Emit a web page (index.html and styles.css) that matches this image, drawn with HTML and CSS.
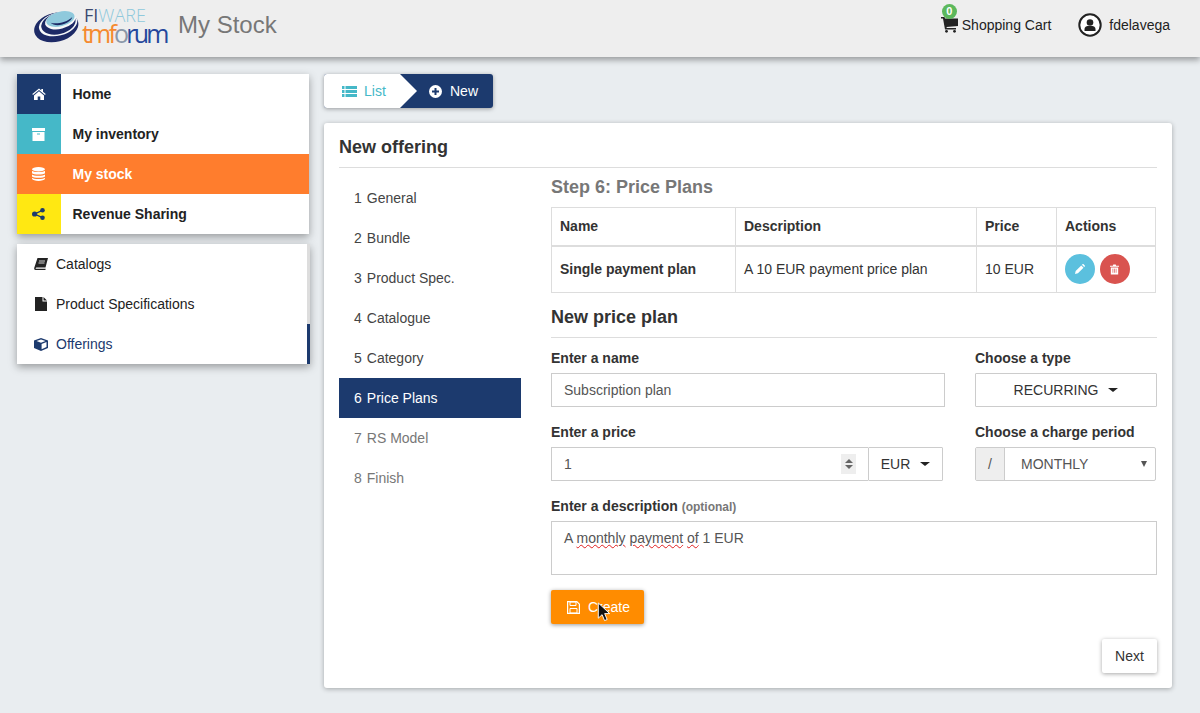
FILE: index.html
```html
<!DOCTYPE html>
<html lang="en">
<head>
	<meta charset="UTF-8" />
	<meta name="viewport" content="width=device-width, initial-scale=1.0" />
	<title>My Stock</title>
	<link rel="stylesheet" href="styles.css">
</head>
<body>
	<header class="topbar">
		<div class="brand">
			<svg class="swirl" width="46" height="36" viewBox="0 0 46 36">
				<g transform="rotate(-14 23 18)">
					<ellipse cx="22" cy="19" rx="22.500" ry="14.500" fill="#1d2a66"/>
					<ellipse cx="24.500" cy="16.500" rx="19.500" ry="11.500" fill="#f6f8f9"/>
					<ellipse cx="25" cy="16" rx="17.500" ry="10.500" fill="#1d2a66"/>
					<ellipse cx="27.500" cy="13.500" rx="15.500" ry="8.300" fill="#f6f8f9"/>
					<ellipse cx="28" cy="12" rx="14.500" ry="7.300" fill="#8fc9dc"/>
					<path d="M17.500 13C21 16 33 17.500 40 13C37 19 21 20 17.500 13Z" fill="#1d2a66"/>
				</g>
			</svg>
			<div class="wordmark">
				<div class="fiware"><span class="fi">FI</span>WARE</div>
				<div class="tmforum"><span class="tm">tmf</span><span class="o">o</span>rum</div>
			</div>
			<div class="app-title">My Stock</div>
		</div>
		<nav class="user-nav">
			<a class="cart">
				<span class="badge">0</span>
				<svg width="17" height="16" viewBox="0 0 17 16"><path d="M0 0h3.500l.5 1.500H17v7.500L5.500 10l.3 1H15v1.500H4L2 1.500H0Z" fill="#222"/><circle cx="5.500" cy="14.300" r="1.400" fill="#222"/><circle cx="13.500" cy="14.300" r="1.400" fill="#222"/></svg>
				<span>Shopping Cart</span>
			</a>
			<a class="user">
				<svg width="24" height="24" viewBox="0 0 24 24"><circle cx="12" cy="12" r="10.700" fill="#fff" stroke="#222" stroke-width="2"/><circle cx="12" cy="9.500" r="3.300" fill="#222"/><path d="M6.500 18v-2c0-2 2-3 3-3h5c1 0 3 1 3 3v2Z" fill="#222"/></svg>
				<span>fdelavega</span>
			</a>
		</nav>
	</header>

	<div class="page">
		<aside class="sidebar">
			<ul class="main-menu">
				<li>
					<span class="tile tile-home"><svg width="14" height="12" viewBox="0 0 14 12"><path d="M7 0.500 0.300 6l.7.900L7 2l6 4.900.7-.9L11 3.800V1H9.300v1.400ZM2 7.500V12h3.700V8.500h2.600V12H12V7.500L7 3.300Z" fill="#fff"/></svg></span>
					<span class="label">Home</span>
				</li>
				<li>
					<span class="tile tile-inventory"><svg width="13" height="13" viewBox="0 0 13 13"><path d="M0 0h13v3H0ZM0.500 4h12v9H.500Z" fill="#fff"/><path d="M5 5.500h3v1H5Z" fill="#45b8c8"/></svg></span>
					<span class="label">My inventory</span>
				</li>
				<li class="active">
					<span class="tile tile-stock"><svg width="13" height="14" viewBox="0 0 13 14"><ellipse cx="6.500" cy="2.200" rx="6.500" ry="2.200" fill="#fff"/><path d="M0 3.700C1 5.500 12 5.500 13 3.700V6.200C12 8 1 8 0 6.200ZM0 7.400C1 9.200 12 9.200 13 7.400V9.500C12 11.300 1 11.300 0 9.500ZM0 10.800C1 12.500 12 12.500 13 10.800V11.800C12 14.600 1 14.600 0 11.800Z" fill="#fff"/></svg></span>
					<span class="label">My stock</span>
				</li>
				<li>
					<span class="tile tile-revenue"><svg width="13" height="12" viewBox="0 0 13 12"><path d="M10.500 2.300 2.500 6l8 3.700" stroke="#1c3a6e" stroke-width="1.300" fill="none"/><circle cx="10.500" cy="2.300" r="2.300" fill="#1c3a6e"/><circle cx="2.600" cy="6" r="2.600" fill="#1c3a6e"/><circle cx="10.500" cy="9.700" r="2.300" fill="#1c3a6e"/></svg></span>
					<span class="label">Revenue Sharing</span>
				</li>
			</ul>
			<ul class="sub-menu">
				<li>
					<svg width="14" height="13" viewBox="0 0 14 13"><path d="M3.500 0H14l-2.500 9.500H2.500c-.8 0-1 .8-.7 1.200h9.900l-.3 1.300H1.500C.5 12 0 11 .2 10Z" fill="#222"/><path d="M5 3h6M4.500 5h6" stroke="#fff" stroke-width=".8"/></svg>
					<span>Catalogs</span>
				</li>
				<li>
					<svg width="14" height="14" viewBox="0 0 14 14"><path d="M1 0h7.500v4.500H13V14H1ZM9.500 0 13 3.500H9.500Z" fill="#222"/></svg>
					<span>Product Specifications</span>
				</li>
				<li class="current">
					<svg width="14" height="13" viewBox="0 0 14 13"><path d="M7 0 14 2.500V10L7 13 0 10V2.500Z" fill="#1c3a6e"/><path d="M7 1.500 11.500 3 7 4.700 2.500 3ZM7.600 6 12.500 4v5L7.600 11.300Z" fill="#fff"/></svg>
					<span>Offerings</span>
				</li>
			</ul>
		</aside>

		<main class="content">
			<div class="crumbs">
				<a class="crumb-list">
					<svg width="15" height="11" viewBox="0 0 15 11"><path d="M0 0h2.500v3H0ZM0 4h2.500v3H0ZM0 8h2.500v3H0ZM3.500 0H15v3H3.500ZM3.500 4H15v3H3.500ZM3.500 8H15v3H3.500Z" fill="#45b8c8"/></svg>
					<span>List</span>
				</a>
				<a class="crumb-new">
					<svg width="13" height="13" viewBox="0 0 13 13"><circle cx="6.500" cy="6.500" r="6.500" fill="#fff"/><path d="M3 5.500h2.500V3h2v2.500H10v2H7.500V10h-2V7.500H3Z" fill="#1c3a6e"/></svg>
					<span>New</span>
				</a>
			</div>

			<section class="panel">
				<h2 class="panel-title">New offering</h2>
				<div class="wizard">
					<ol class="steps">
						<li><span class="num">1</span>General</li>
						<li><span class="num">2</span>Bundle</li>
						<li><span class="num">3</span>Product Spec.</li>
						<li><span class="num">4</span>Catalogue</li>
						<li><span class="num">5</span>Category</li>
						<li class="active"><span class="num">6</span>Price Plans</li>
						<li class="todo"><span class="num">7</span>RS Model</li>
						<li class="todo"><span class="num">8</span>Finish</li>
					</ol>
					<div class="step-body">
						<h3 class="step-title">Step 6: Price Plans</h3>
						<table class="plans">
							<thead>
								<tr><th class="col-name">Name</th><th class="col-desc">Description</th><th class="col-price">Price</th><th>Actions</th></tr>
							</thead>
							<tbody>
								<tr>
									<td><b>Single payment plan</b></td>
									<td>A 10 EUR payment price plan</td>
									<td>10 EUR</td>
									<td class="actions">
										<span class="round round-edit"><svg width="10" height="10" viewBox="0 0 12 12"><path d="M0 12 .8 8.500 7.500 1.800l2.700 2.700L3.500 11.200ZM8.300 1 9 .3c.4-.4 1-.4 1.300 0l1.400 1.400c.4.400.4 1 0 1.300l-.7.700Z" fill="#fff"/></svg></span>
										<span class="round round-delete"><svg width="9" height="11" viewBox="0 0 11 12"><path d="M3.500 1.500 4 0h3l.5 1.500H11v1.200H0V1.500ZM1 3.500h9V12H1Z" fill="#fff"/><path d="M3.500 5v5M5.500 5v5M7.500 5v5" stroke="#d9534f" stroke-width=".8"/></svg></span>
									</td>
								</tr>
							</tbody>
						</table>

						<h3 class="form-title">New price plan</h3>

						<div class="form-row">
							<div class="field field-name">
								<label>Enter a name</label>
								<div class="input">Subscription plan</div>
							</div>
							<div class="field field-type">
								<label>Choose a type</label>
								<div class="dropdown">RECURRING <i class="caret"></i></div>
							</div>
						</div>

						<div class="form-row">
							<div class="field field-price">
								<label>Enter a price</label>
								<div class="input-group">
									<div class="input price-input">
										<span>1</span>
										<span class="spinner"><i class="up"></i><i class="down"></i></span>
									</div>
									<div class="dropdown currency">EUR <i class="caret"></i></div>
								</div>
							</div>
							<div class="field field-period">
								<label>Choose a charge period</label>
								<div class="period">
									<span class="addon">/</span>
									<span class="period-value">MONTHLY</span>
									<i class="select-arrow"></i>
								</div>
							</div>
						</div>

						<div class="field">
							<label class="label-desc">Enter a description <small>(optional)</small></label>
							<div class="input textarea">A <span class="typo">monthly</span> <span class="typo">payment</span> <span class="typo">of</span> 1 EUR</div>
						</div>

						<button class="btn-create">
							<svg width="13" height="13" viewBox="0 0 13 13"><path d="M.6.600h9.200l2.600 2.600v9.200H.6Z" fill="none" stroke="#fff" stroke-width="1.200"/><path d="M3 1h6v3.500H3ZM3 7.500h7V12H3Z" fill="none" stroke="#fff"/></svg>
							Create
						</button>
						<svg class="pointer" width="14" height="20" viewBox="0 0 14 21"><path d="M1 1v16l4-3.700 2.600 6.200 2.700-1.100-2.600-6.200h5.300Z" fill="#111" stroke="#fff" stroke-width="1"/></svg>

						<div class="wizard-foot"><button class="btn-next">Next</button></div>
					</div>
				</div>
			</section>
		</main>
	</div>
</body>
</html>
```

FILE: styles.css
```css
* {
	box-sizing: border-box;
}
html,
body {
	height: 713px;
	overflow: hidden;
}
body {
	margin: 0;
	font-family: "Liberation Sans", Arial, sans-serif;
	font-size: 14px;
	line-height: 20px;
	color: #333;
	background-color: #e9edf0;
}
ul,
ol {
	list-style: none;
	margin: 0;
	padding: 0;
}

/* top bar */
.topbar {
	height: 57px;
	padding: 0 30px 0 34px;
	display: flex;
	justify-content: space-between;
	background-color: #eee;
	box-shadow: 0 3px 6px rgba(0, 0, 0, 0.35);
}
.brand {
	display: flex;
	align-items: flex-start;
}
.swirl {
	margin-top: 8px;
}
.wordmark {
	width: 60px;
	margin: 7px 0 0 4px;
	font-family: "Open Sans", sans-serif;
}
.fiware {
	font-size: 18px;
	line-height: 16px;
	font-weight: 300;
	color: #8fc9dc;
	letter-spacing: 0;
}
.fiware .fi {
	color: #3c4a70;
	font-weight: 400;
}
.tmforum {
	margin-left: -2px;
	font-size: 25px;
	line-height: 20px;
	font-weight: 400;
	letter-spacing: -2.800px;
	color: #24479c;
	white-space: nowrap;
}
.tmforum .tm {
	color: #f58a2e;
}
.tmforum .o {
	color: #8a97a8;
}
.app-title {
	margin: 11px 0 0 34px;
	font-size: 24px;
	line-height: 28px;
	color: #777;
}
.user-nav {
	display: flex;
	align-items: center;
	gap: 27px;
	height: 50px;
	color: #222;
}
.cart,
.user {
	display: flex;
	align-items: center;
}
.cart {
	position: relative;
	gap: 4px;
}
.user {
	gap: 7px;
}
.badge {
	position: absolute;
	left: 1px;
	top: -11px;
	width: 15px;
	height: 15px;
	border-radius: 50%;
	background-color: #5cb85c;
	color: #fff;
	font-size: 11px;
	font-weight: bold;
	line-height: 15px;
	text-align: center;
}

/* page columns */
.page {
	display: flex;
	align-items: flex-start;
	gap: 14px;
	padding: 17px 28px 0 17px;
}
.sidebar {
	width: 293px;
	flex-shrink: 0;
}
.main-menu {
	width: 292px;
	background-color: #fff;
	box-shadow: 0 3px 8px rgba(0, 0, 0, 0.35);
}
.main-menu li {
	height: 40px;
	display: flex;
	align-items: center;
	font-weight: bold;
	color: #222;
}
.main-menu li.active {
	background-color: #ff7d2d;
	color: #fff;
}
.tile {
	width: 44px;
	height: 40px;
	margin-right: 11.500px;
	padding-right: 1px;
	display: flex;
	align-items: center;
	justify-content: center;
}
.tile-home {
	background-color: #1c3a6e;
}
.tile-inventory {
	background-color: #45b8c8;
}
.tile-stock {
	background-color: #ff7d2d;
}
.tile-revenue {
	background-color: #ffe812;
}
.sub-menu {
	margin-top: 10px;
	background-color: #fff;
	box-shadow: 0 3px 8px rgba(0, 0, 0, 0.35);
}
.sub-menu li {
	height: 40px;
	padding-left: 17px;
	display: flex;
	align-items: center;
	gap: 8px;
	color: #222;
	border-right: 3px solid #ddd;
}
.sub-menu li svg {
	flex-shrink: 0;
}
.sub-menu li.current {
	color: #1c3a6e;
	border-right-color: #1c3a6e;
}

/* main column */
.content {
	width: 848px;
}
.crumbs {
	display: flex;
	width: 169px;
	height: 34px;
	border-radius: 3px;
	overflow: hidden;
	box-shadow: 0 1px 4px rgba(0, 0, 0, 0.35);
	background-color: #1c3a6e;
}
.crumb-list,
.crumb-new {
	display: flex;
	align-items: center;
}
.crumb-list {
	width: 93px;
	padding-left: 18px;
	gap: 7px;
	color: #45b8c8;
	background-color: #fff;
	clip-path: polygon(0 0, 76px 0, 93px 50%, 76px 100%, 0 100%);
}
.crumb-new {
	padding-left: 12px;
	gap: 8px;
	color: #fff;
}
.panel {
	margin-top: 15px;
	height: 565px;
	padding: 15px;
	background-color: #fff;
	border-radius: 3px;
	box-shadow: 0 1px 5px rgba(0, 0, 0, 0.3);
}
.panel-title {
	margin: 0;
	height: 30px;
	font-size: 18px;
	line-height: 18px;
	border-bottom: 1px solid #ddd;
	color: #333;
}
.wizard {
	display: flex;
	gap: 30px;
	margin-top: 10px;
}
.steps {
	width: 182px;
	flex-shrink: 0;
}
.steps li {
	height: 40px;
	padding-left: 15px;
	line-height: 40px;
	color: #444;
}
.steps .num {
	margin-right: 5px;
}
.steps li.active {
	background-color: #1c3a6e;
	color: #fff;
}
.steps li.todo {
	color: #777;
}
.step-body {
	position: relative;
	width: 606px;
}
.step-title {
	margin: 0;
	height: 29px;
	font-size: 18px;
	line-height: 18px;
	color: #777;
}
.plans {
	width: 605px;
	border-collapse: collapse;
	table-layout: fixed;
	color: #333;
}
.plans th,
.plans td {
	border: 1px solid #ddd;
	padding: 0 8px;
	text-align: left;
}
.plans th {
	height: 38px;
	border-bottom-width: 2px;
}
.plans td {
	height: 47px;
}
.col-name {
	width: 184px;
}
.col-desc {
	width: 241px;
}
.col-price {
	width: 80px;
}
.actions {
	white-space: nowrap;
}
.round {
	display: inline-flex;
	width: 30px;
	height: 30px;
	border-radius: 50%;
	align-items: center;
	justify-content: center;
	vertical-align: middle;
}
.round-edit {
	background-color: #5bc0de;
}
.round-delete {
	margin-left: 1px;
	background-color: #d9534f;
}
.form-title {
	margin: 15px 0 10px;
	height: 30px;
	font-size: 18px;
	line-height: 18px;
	border-bottom: 1px solid #ddd;
	color: #333;
}
.form-row {
	display: flex;
	margin-bottom: 15px;
}
.field label {
	display: block;
	margin-bottom: 5px;
	font-weight: bold;
	color: #333;
}
.field .label-desc {
	height: 20px;
}
.field small {
	font-size: 12px;
	color: #777;
}
.field-name {
	width: 394px;
	margin-right: 30px;
}
.field-type {
	width: 182px;
}
.field-price {
	width: 392px;
	margin-right: 32px;
}
.field-period {
	width: 181px;
}
.input {
	height: 34px;
	padding: 6px 12px;
	border: 1px solid #ccc;
	color: #555;
}
.dropdown {
	height: 34px;
	display: flex;
	align-items: center;
	justify-content: center;
	gap: 8px;
	border: 1px solid #ccc;
	border-radius: 1px;
	color: #333;
}
.caret {
	width: 0;
	height: 0;
	margin-left: 2px;
	border-top: 4px solid #222;
	border-left: 5px solid transparent;
	border-right: 5px solid transparent;
}
.input-group {
	display: flex;
}
.price-input {
	width: 317px;
	display: flex;
	justify-content: space-between;
	align-items: center;
	padding-right: 12px;
	border-right: 0;
}
.spinner {
	width: 15px;
	height: 20px;
	display: flex;
	flex-direction: column;
	align-items: center;
	justify-content: center;
	gap: 2px;
	background-color: #eee;
}
.spinner i {
	width: 0;
	height: 0;
	border-left: 4px solid transparent;
	border-right: 4px solid transparent;
}
.spinner .up {
	border-bottom: 4px solid #666;
}
.spinner .down {
	border-top: 4px solid #666;
}
.currency {
	width: 75px;
}
.period {
	height: 34px;
	display: flex;
	align-items: center;
	border: 1px solid #ccc;
	border-radius: 2px;
	color: #555;
}
.addon {
	width: 29px;
	height: 32px;
	line-height: 32px;
	text-align: center;
	background-color: #eee;
	border-right: 1px solid #ccc;
}
.period-value {
	flex: 1;
	padding-left: 16px;
}
.select-arrow {
	width: 0;
	height: 0;
	margin-right: 8px;
	border-top: 6px solid #555;
	border-left: 3px solid transparent;
	border-right: 3px solid transparent;
}
.textarea {
	height: 54px;
	width: 606px;
}
.typo {
	text-decoration: underline wavy #e02020 1px;
	text-underline-offset: 1px;
}
.btn-create {
	margin-top: 15px;
	width: 93px;
	height: 34px;
	padding: 0 0 0 2px;
	display: flex;
	align-items: center;
	justify-content: center;
	gap: 8px;
	border: 0;
	border-radius: 2px;
	background-color: #ff8c00;
	color: #fff;
	font: inherit;
	box-shadow: 0 1px 4px rgba(0, 0, 0, 0.4);
}
.pointer {
	position: absolute;
	left: 46px;
	top: 424px;
}
.wizard-foot {
	display: flex;
	justify-content: flex-end;
	margin-top: 15px;
}
.btn-next {
	width: 55px;
	height: 34px;
	border: 0;
	border-radius: 2px;
	background-color: #fff;
	color: #333;
	font: inherit;
	box-shadow: 0 1px 4px rgba(0, 0, 0, 0.35);
}
```
